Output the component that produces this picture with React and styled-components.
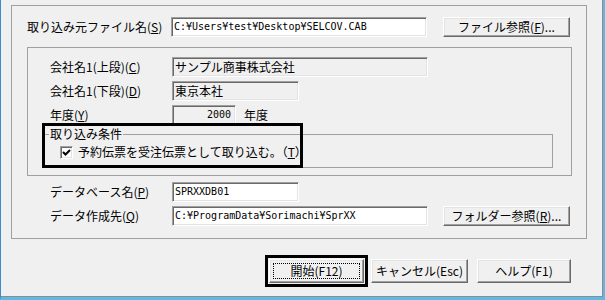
import React from 'react';
import styled, {createGlobalStyle} from 'styled-components';

const GlobalStyle = createGlobalStyle`
  html, body {
    margin: 0;
    padding: 0;
    background: #f0f0f0;
  }
  body {
    font-family: "Noto Sans CJK JP", "Noto Sans", sans-serif;
    font-size: 12px;
    color: #000;
  }
  u {
    text-underline-offset: 1px;
  }
`;

const Window = styled.div`
  box-sizing: border-box;
  width: 605px;
  height: 300px;
  background: #f0f0f0;
  border-left: 1px solid #3f8ccc;
  border-right: 2px solid #5cb9e8;
  border-bottom: 3px solid #5cb9e8;
  box-shadow: inset -1px -1px 0 #8c8c8c;
  padding: 5px 0 0 10px;
  display: flex;
  flex-direction: column;
`;

const Frame = styled.div`
  box-sizing: border-box;
  width: 576px;
  border: 1px solid #a0a0a0;
  padding: 11px 0 12px 15px;
  display: flex;
  flex-direction: column;
`;

const Row = styled.div`
  display: flex;
  align-items: center;
  height: 20px;
  margin-top: ${(p) => p.$mt || 0}px;
  padding-left: ${(p) => p.$indent || 0}px;
`;

const Label = styled.span`
  width: ${(p) => p.$w}px;
  flex-shrink: 0;
  white-space: nowrap;
  line-height: 14px;
`;

const Field = styled.div`
  box-sizing: border-box;
  width: ${(p) => p.$w}px;
  height: 20px;
  flex-shrink: 0;
  background: ${(p) => (p.$readOnly ? '#f0f0f0' : '#fff')};
  border: 1px solid;
  border-color: #a0a0a0 #fff #fff #a0a0a0;
  box-shadow: inset 1px 1px 0 #696969, inset -1px -1px 0 #e3e3e3;
  padding: 0 ${(p) => (p.$right ? 4 : 1)}px 0 2px;
  font-family: ${(p) =>
    p.$jp ? '"Noto Sans CJK JP", sans-serif' : '"DejaVu Sans Mono", monospace'};
  font-size: ${(p) => (p.$jp ? 12 : 10)}px;
  line-height: 18px;
  text-align: ${(p) => (p.$right ? 'right' : 'left')};
  white-space: nowrap;
  overflow: hidden;
`;

const Suffix = styled.span`
  margin-left: 8px;
  line-height: 14px;
`;

const Button = styled.button`
  box-sizing: border-box;
  position: relative;
  width: ${(p) => p.$w}px;
  height: ${(p) => p.$h || 20}px;
  margin-left: ${(p) => p.$ml || 0}px;
  flex-shrink: 0;
  padding: 0;
  background: #f0f0f0;
  border: 1px solid;
  border-color: #fff #696969 #696969 #fff;
  box-shadow: inset -1px -1px 0 #a0a0a0, inset 1px 1px 0 #e3e3e3;
  font-family: "Noto Sans CJK JP", sans-serif;
  font-size: 12px;
  line-height: 14px;
  color: #000;
  white-space: nowrap;
  &::after {
    content: '';
    display: ${(p) => (p.$focus ? 'block' : 'none')};
    position: absolute;
    inset: 3px 3px 3px 3px;
    border: 1px dotted #000;
  }
`;

const InnerGroup = styled.div`
  position: relative;
  box-sizing: border-box;
  width: 545px;
  margin-top: 10px;
  border: 1px solid #a0a0a0;
  padding: 9px 0 7px 0;
  display: flex;
  flex-direction: column;
  gap: 4px;
`;

const Group = styled.fieldset`
  box-sizing: border-box;
  width: 510px;
  min-width: 0;
  margin: -2px 0 0 15px;
  border: 1px solid #a0a0a0;
  padding: 4px 0 8px 5px;
`;

const Legend = styled.legend`
  padding: 0 1px;
  line-height: 14px;
`;

const CheckRow = styled.label`
  display: flex;
  align-items: center;
  gap: 5px;
  margin-left: 11px;
  height: 14px;
  line-height: 14px;
`;

const CheckBox = styled.span`
  box-sizing: border-box;
  width: 13px;
  height: 13px;
  background: #fff;
  border: 1px solid;
  border-color: #a0a0a0 #fff #fff #a0a0a0;
  box-shadow: inset 1px 1px 0 #696969, inset -1px -1px 0 #e3e3e3;
  display: flex;
  align-items: center;
  justify-content: center;
`;

const Highlight = styled.div`
  position: absolute;
  left: 14px;
  top: 75px;
  width: 261px;
  height: 45px;
  box-sizing: border-box;
  border: 3px solid #000;
  pointer-events: none;
`;

const ButtonBar = styled.div`
  box-sizing: border-box;
  width: 576px;
  margin-top: 16px;
  padding-right: 16px;
  display: flex;
  justify-content: flex-end;
  align-items: center;
`;

const DefaultMark = styled.div`
  border: 3px solid #000;
  padding: 1px;
  margin-right: 3px;
  display: flex;
`;

const App = function () {
  return (
    <Window>
      <GlobalStyle />
      <Frame>
        <Row>
          <Label $w={144}>
            取り込み元ファイル名(<u>S</u>)
          </Label>
          <Field $w={256}>C:¥Users¥test¥Desktop¥SELCOV.CAB</Field>
          <Button $w={127} $ml={16}>
            ファイル参照(<u>F</u>)...
          </Button>
        </Row>

        <InnerGroup>
          <Row $indent={22}>
            <Label $w={122}>
              会社名1(上段)(<u>C</u>)
            </Label>
            <Field $w={256} $readOnly $jp>
              サンプル商事株式会社
            </Field>
          </Row>
          <Row $indent={22}>
            <Label $w={122}>
              会社名1(下段)(<u>D</u>)
            </Label>
            <Field $w={127} $readOnly $jp>
              東京本社
            </Field>
          </Row>
          <Row $indent={22}>
            <Label $w={122}>
              年度(<u>Y</u>)
            </Label>
            <Field $w={64} $readOnly $right>
              2000
            </Field>
            <Suffix>年度</Suffix>
          </Row>
          <Group>
            <Legend>取り込み条件</Legend>
            <CheckRow>
              <CheckBox>
                <svg width="9" height="9" viewBox="0 0 9 9">
                  <polyline
                    points="1,4 3.5,6.5 8,2"
                    fill="none"
                    stroke="#000"
                    strokeWidth="2"
                  />
                </svg>
              </CheckBox>
              <span>
                予約伝票を受注伝票として取り込む。（<u>T</u>）
              </span>
            </CheckRow>
          </Group>
          <Highlight />
        </InnerGroup>

        <Row $indent={23} $mt={6}>
          <Label $w={122}>
            データベース名(<u>P</u>)
          </Label>
          <Field $w={127}>SPRXXDB01</Field>
        </Row>
        <Row $indent={23} $mt={4}>
          <Label $w={122}>
            データ作成先(<u>Q</u>)
          </Label>
          <Field $w={256}>C:¥ProgramData¥Sorimachi¥SprXX</Field>
          <Button $w={127} $ml={15}>
            フォルダー参照(<u>R</u>)...
          </Button>
        </Row>
      </Frame>

      <ButtonBar>
        <DefaultMark>
          <Button $w={95} $h={24} $focus>
            開始(F12)
          </Button>
        </DefaultMark>
        <Button $w={97} $h={24}>
          キャンセル(Esc)
        </Button>
        <Button $w={94} $h={24} $ml={9}>
          ヘルプ(F1)
        </Button>
      </ButtonBar>
    </Window>
  );
};

export default App;
